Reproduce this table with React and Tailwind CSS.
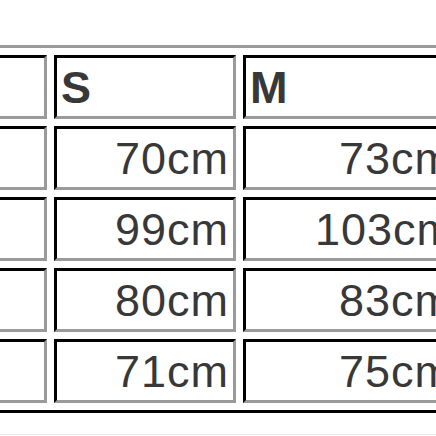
import React from "react";

const rows = [
  ["", "70cm", "73cm"],
  ["", "99cm", "103cm"],
  ["", "80cm", "83cm"],
  ["", "71cm", "75cm"],
];

function Cell({ children, header, right }) {
  return (
    <div
      className={
        "h-[64px] flex items-center border-t-[3px] border-l-[3px] border-b-[3px] border-r-[3px] border-t-black border-l-black border-b-[#9a9a9a] border-r-[#9a9a9a] px-[4px] overflow-hidden whitespace-nowrap " +
        (right ? "justify-end " : "justify-start ") +
        (header ? "font-bold pt-[1px]" : "font-normal")
      }
    >
      {children}
    </div>
  );
}

export default function App() {
  return (
    <div
      className="w-[436px] h-[436px] overflow-hidden bg-white relative text-[#383838] text-[45px] leading-none tracking-[1px]"
      style={{ fontFamily: '"Liberation Sans", Arial, sans-serif' }}
    >
      <div className="pt-[45px]">
        <div className="ml-[-70px] w-[600px] border-t-[3px] border-l-[3px] border-b-[3px] border-r-[3px] border-t-[#9a9a9a] border-l-[#9a9a9a] border-b-black border-r-black p-[7px]">
          <div className="grid grid-cols-[107px_182px_260px] gap-[7px]">
            <Cell header></Cell>
            <Cell header>S</Cell>
            <Cell header>M</Cell>
            {rows.map((r, i) => (
              <React.Fragment key={i}>
                <Cell right>{r[0]}</Cell>
                <Cell right>{r[1]}</Cell>
                <div className="h-[64px] flex items-center justify-start border-t-[3px] border-l-[3px] border-b-[3px] border-r-[3px] border-t-black border-l-black border-b-[#9a9a9a] border-r-[#9a9a9a] overflow-hidden whitespace-nowrap">
                  <span className={i === 1 ? "pl-[69px]" : "pl-[93px]"}>{r[2]}</span>
                </div>
              </React.Fragment>
            ))}
          </div>
        </div>
      </div>
      <div className="absolute left-0 right-0 top-[434px] h-px bg-[#e8e8e8]" />
    </div>
  );
}
